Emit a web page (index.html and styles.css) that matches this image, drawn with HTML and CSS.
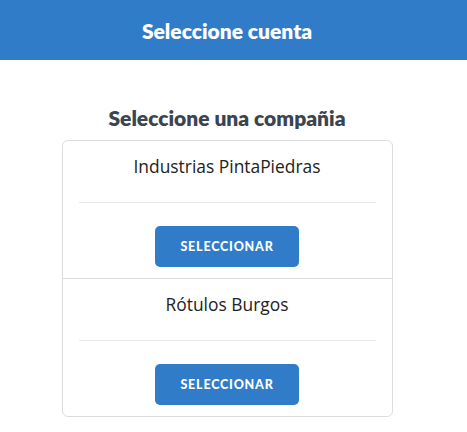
FILE: index.html
```html
<!DOCTYPE html>
<html lang="es">
<head>
<meta charset="utf-8">
<link rel="stylesheet" href="styles.css">
</head>
<body>
<header class="topbar">
  <h1 class="topbar-title">Seleccione cuenta</h1>
</header>
<main class="content">
  <h2 class="section-title">Seleccione una compañia</h2>
  <div class="card">
    <div class="item">
      <div class="item-name">Industrias PintaPiedras</div>
      <hr class="item-sep">
      <button class="btn">SELECCIONAR</button>
    </div>
    <div class="item">
      <div class="item-name">Rótulos Burgos</div>
      <hr class="item-sep">
      <button class="btn">SELECCIONAR</button>
    </div>
  </div>
</main>
</body>
</html>
```
FILE: styles.css
```css
* { box-sizing: border-box; }
html, body { margin: 0; padding: 0; background: #fff; }
body { font-family: "Open Sans", sans-serif; color: #222; }

.topbar {
  height: 60px;
  background: #317cc9;
  display: flex;
  align-items: center;
  justify-content: center;
  padding-right: 13px;
}
.topbar-title {
  margin: 0;
  font-family: "Lato", sans-serif;
  font-weight: 800;
  font-size: 21px;
  color: #fff;
}

.content {
  display: flex;
  flex-direction: column;
  align-items: center;
  padding: 44px 13px 0 0;
}
.section-title {
  margin: 0 0 9px;
  font-family: "Lato", sans-serif;
  font-weight: 800;
  font-size: 21px;
  line-height: 27px;
  color: #3b4451;
}

.card {
  width: 331px;
  border: 1px solid #dcdcdc;
  border-radius: 6px;
}
.item {
  display: flex;
  flex-direction: column;
  align-items: center;
  padding: 13px 16px 11px;
}
.item + .item { border-top: 1px solid #dcdcdc; }
.item-name {
  font-size: 17.4px;
  line-height: 24px;
  color: #222;
}
.item-sep {
  align-self: stretch;
  margin: 24px 0 23px;
  border: 0;
  border-top: 1px solid #e8e8e8;
  height: 0;
}
.btn {
  width: 144px;
  height: 41px;
  border: 0;
  border-radius: 5px;
  background: #317cc9;
  color: #fff;
  font-family: "Lato", sans-serif;
  font-weight: 900;
  font-size: 12.5px;
  letter-spacing: 0.8px;
}
```
